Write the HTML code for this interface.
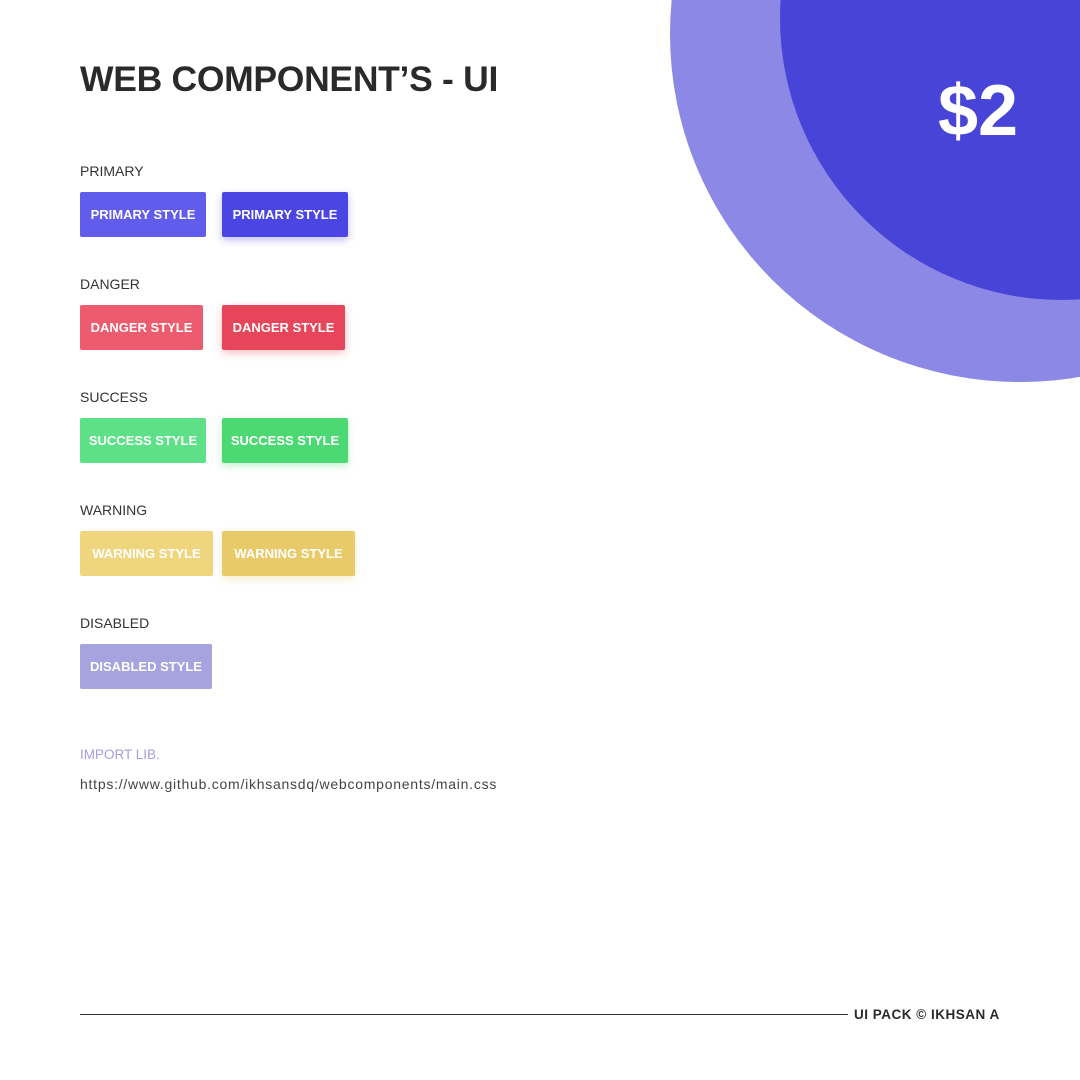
<!DOCTYPE html>
<html><head><meta charset="utf-8"><style>
*{margin:0;padding:0;box-sizing:border-box}
body{width:1080px;height:1080px;background:#fff;position:relative;overflow:hidden;font-family:"Liberation Sans",sans-serif;color:#2a2a2a}
.c{position:absolute;border-radius:50%}
h1{position:absolute;left:80px;top:59px;font-size:35.5px;font-weight:bold;letter-spacing:-0.3px;white-space:nowrap}
.price{position:absolute;left:938px;top:70px;font-size:72px;font-weight:bold;color:#fff;letter-spacing:0}
.lbl{position:absolute;left:80px;font-size:14px;color:#333;letter-spacing:0}
.b{position:absolute;height:45px;border-radius:2px;color:#fff;font-weight:bold;font-size:13px;display:flex;align-items:center;justify-content:center;white-space:nowrap}
.imp{position:absolute;left:80px;top:747px;font-size:13.5px;color:#a59ddc}
.url{position:absolute;left:80px;top:776px;font-size:14px;color:#444;letter-spacing:0.75px}
.line{position:absolute;left:80px;top:1014px;width:768px;height:1px;background:#333}
.ft{position:absolute;left:854px;top:1007px;font-size:13.5px;font-weight:bold;color:#2a2a2a;letter-spacing:0.5px}
</style></head><body>
<div class="c" style="left:670px;top:-314px;width:700px;height:696px;background:#8b88e6"></div>
<div class="c" style="left:780px;top:-264px;width:564px;height:564px;background:#4844d8"></div>
<div class="price">$2</div>
<h1>WEB COMPONENT’S - UI</h1>

<div class="lbl" style="top:163px">PRIMARY</div>
<div class="b" style="left:80px;top:192px;width:126px;background:#625ced">PRIMARY STYLE</div>
<div class="b" style="left:222px;top:192px;width:126px;background:#4b45e4;box-shadow:0 3px 8px rgba(75,69,228,.35)">PRIMARY STYLE</div>

<div class="lbl" style="top:276px">DANGER</div>
<div class="b" style="left:80px;top:305px;width:123px;background:#ed5b6f">DANGER STYLE</div>
<div class="b" style="left:222px;top:305px;width:123px;background:#e6455a;box-shadow:0 3px 8px rgba(230,69,90,.35)">DANGER STYLE</div>

<div class="lbl" style="top:389px">SUCCESS</div>
<div class="b" style="left:80px;top:418px;width:126px;background:#5de088">SUCCESS STYLE</div>
<div class="b" style="left:222px;top:418px;width:126px;background:#4cd974;box-shadow:0 3px 8px rgba(76,217,116,.35)">SUCCESS STYLE</div>

<div class="lbl" style="top:502px">WARNING</div>
<div class="b" style="left:80px;top:531px;width:133px;background:#efd67e">WARNING STYLE</div>
<div class="b" style="left:222px;top:531px;width:133px;background:#e8cb68;box-shadow:0 3px 8px rgba(232,203,104,.35)">WARNING STYLE</div>

<div class="lbl" style="top:615px">DISABLED</div>
<div class="b" style="left:80px;top:644px;width:132px;background:#a7a3de">DISABLED STYLE</div>

<div class="imp">IMPORT LIB.</div>
<div class="url">https://www.github.com/ikhsansdq/webcomponents/main.css</div>

<div class="line"></div>
<div class="ft">UI PACK © IKHSAN A</div>
</body></html>
